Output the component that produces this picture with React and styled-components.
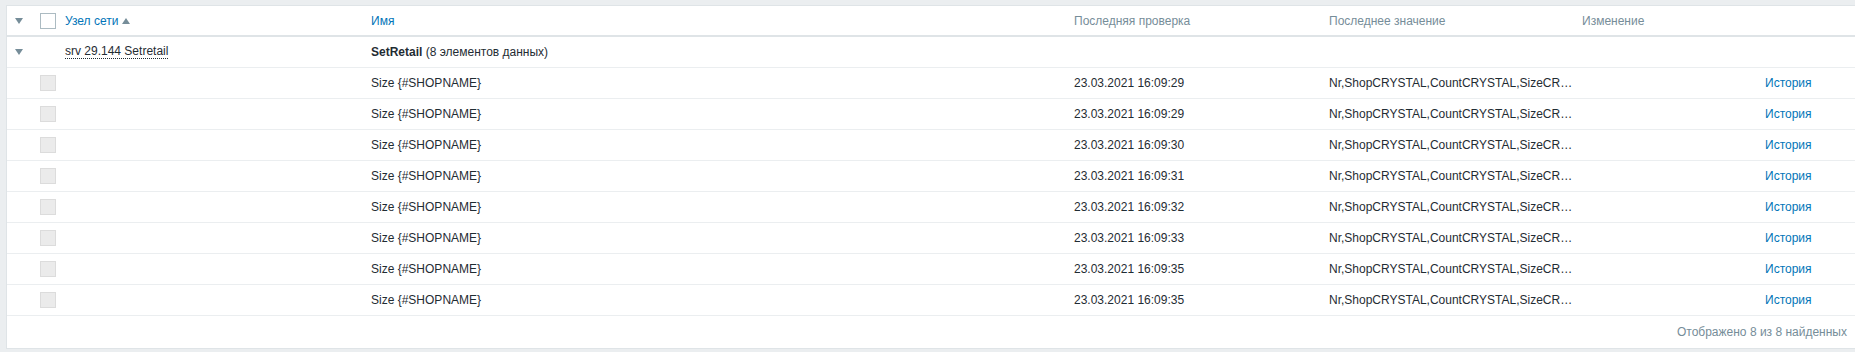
import React from 'react'
import styled, { createGlobalStyle } from 'styled-components'

const rows = ['29', '29', '30', '31', '32', '33', '35', '35']

const App = () =>
    <>
        <GlobalStyle />
        <StyledPage>
            <StyledPanel>
                <StyledHeader>
                    <StyledCell><StyledArrow /></StyledCell>
                    <StyledCell $pad={7}><StyledCheckbox /></StyledCell>
                    <StyledCell><StyledHeadLink>Узел сети</StyledHeadLink><StyledSort /></StyledCell>
                    <StyledCell><StyledHeadLink>Имя</StyledHeadLink></StyledCell>
                    <StyledCell $muted>Последняя проверка</StyledCell>
                    <StyledCell $muted>Последнее значение</StyledCell>
                    <StyledCell $muted>Изменение</StyledCell>
                    <StyledCell />
                </StyledHeader>
                <StyledRow $height={30}>
                    <StyledCell><StyledArrow /></StyledCell>
                    <StyledCell />
                    <StyledCell><StyledHost>srv 29.144 Setretail</StyledHost></StyledCell>
                    <StyledCell><b>SetRetail</b>&nbsp;(8 элементов данных)</StyledCell>
                    <StyledCell />
                    <StyledCell />
                    <StyledCell />
                    <StyledCell />
                </StyledRow>
                {rows.map((sec, i) =>
                    <StyledRow key={i} $height={30}>
                        <StyledCell />
                        <StyledCell $pad={7}><StyledCheckbox $disabled /></StyledCell>
                        <StyledCell />
                        <StyledCell>Size {'{#SHOPNAME}'}</StyledCell>
                        <StyledCell>23.03.2021 16:09:{sec}</StyledCell>
                        <StyledCell>Nr,ShopCRYSTAL,CountCRYSTAL,SizeCR…</StyledCell>
                        <StyledCell />
                        <StyledCell><StyledLink>История</StyledLink></StyledCell>
                    </StyledRow>
                )}
                <StyledFooter>Отображено 8 из 8 найденных</StyledFooter>
            </StyledPanel>
        </StyledPage>
    </>

export default App

const GlobalStyle = createGlobalStyle`
    body {
        margin: 0;
        background: #ebeef0;
        font-family: "Liberation Sans", Arial, sans-serif;
        font-size: 12px;
        color: #1f2c33;
    }
`

const StyledPage = styled.div`
    padding: 5px 0 3px 6px;
`

const StyledPanel = styled.div`
    background: #fff;
    border: 1px solid #dfe4e7;
    border-right: none;
`

const columns = '26px 27px 306px 703px 255px 253px 183px 1fr'

const StyledRow = styled.div`
    display: grid;
    grid-template-columns: ${columns};
    height: ${p => p.$height}px;
    border-bottom: 1px solid #ebeef0;
    align-items: center;
`

const StyledHeader = styled(StyledRow)`
    height: 29px;
    border-bottom: 2px solid #dfe4e7;
`

const StyledCell = styled.div`
    padding-left: ${p => p.$pad ?? 5}px;
    display: flex;
    align-items: center;
    white-space: nowrap;
    color: ${p => p.$muted ? '#768d99' : 'inherit'};
`

const StyledArrow = styled.span`
    display: block;
    margin-left: 3px;
    width: 0;
    height: 0;
    border-left: 4px solid transparent;
    border-right: 4px solid transparent;
    border-top: 6px solid #768d99;
`

const StyledSort = styled.span`
    display: inline-block;
    margin-left: 4px;
    width: 0;
    height: 0;
    border-left: 4px solid transparent;
    border-right: 4px solid transparent;
    border-bottom: 6px solid #768d99;
`

const StyledCheckbox = styled.span`
    display: block;
    box-sizing: border-box;
    width: 16px;
    height: 16px;
    background: ${p => p.$disabled ? '#ebebeb' : '#fff'};
    border: 1px solid ${p => p.$disabled ? '#dcdcdc' : '#acbbc2'};
`

const StyledHeadLink = styled.span`
    color: #0275b8;
`

const StyledLink = styled.span`
    color: #0275b8;
`

const StyledHost = styled.span`
    border-bottom: 1px dotted #1f2c33;
    line-height: 13px;
`

const StyledFooter = styled.div`
    height: 32px;
    display: flex;
    align-items: center;
    justify-content: flex-end;
    padding-right: 8px;
    color: #768d99;
`
